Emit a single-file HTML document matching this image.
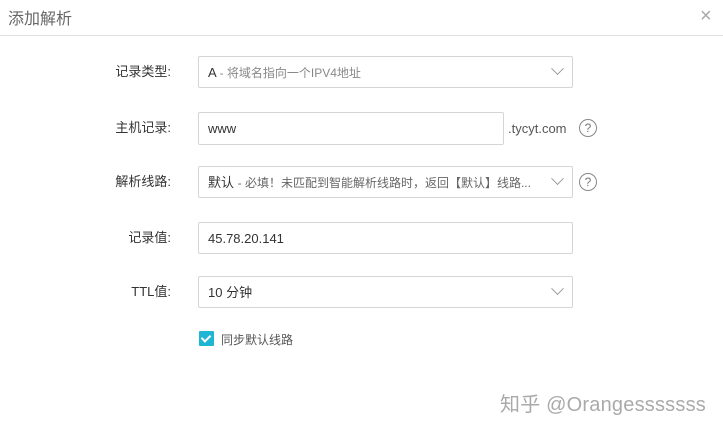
<!DOCTYPE html>
<html><head><meta charset="utf-8"><style>
body{margin:0;width:723px;height:433px;background:#fff;font-family:"Liberation Sans","Noto Sans CJK SC",sans-serif;position:relative;overflow:hidden;color:#333}
.t{position:absolute;left:8px;top:5px;font-size:16px;color:#666}
.hr{position:absolute;left:0;top:35px;width:723px;height:1px;background:#e2e2e2}
.x{position:absolute;left:700px;top:5px;font-size:20px;color:#aaa;font-weight:300}
.lab{position:absolute;right:552px;font-size:13px;color:#333;text-align:right;white-space:nowrap}
.box{position:absolute;left:198px;border:1px solid #d5d5d5;border-radius:2px;box-sizing:border-box;height:32px;font-size:13px;line-height:31px;padding-left:9px;color:#333;white-space:nowrap}
.arr{position:absolute;right:10px;top:10px;width:8px;height:8px;border-right:1px solid #999;border-bottom:1px solid #999;transform:rotate(45deg) translate(-2px,-2px)}
.q{position:absolute;width:16px;height:16px;border:1px solid #888;border-radius:50%;font-size:12px;line-height:16px;text-align:center;color:#777}
</style></head><body>
<div class="t">添加解析</div><div class="x">×</div><div class="hr"></div>
<div class="lab" style="top:61px">记录类型:</div>
<div class="box" style="top:56px;width:375px">A <span style="color:#888;font-size:12px">- 将域名指向一个IPV4地址</span><div class="arr"></div></div>
<div class="lab" style="top:117px">主机记录:</div>
<div class="box" style="top:112px;width:306px;height:33px">www</div>
<div style="position:absolute;left:508px;top:121px;font-size:13px;color:#555">.tycyt.com</div>
<div class="q" style="left:579px;top:119px">?</div>
<div class="lab" style="top:171px">解析线路:</div>
<div class="box" style="top:166px;width:375px">默认 <span style="color:#666;font-size:12px">- 必填！未匹配到智能解析线路时，返回【默认】线路...</span><div class="arr"></div></div>
<div class="q" style="left:579px;top:173px">?</div>
<div class="lab" style="top:227px">记录值:</div>
<div class="box" style="top:222px;width:375px">45.78.20.141</div>
<div class="lab" style="top:281px">TTL值:</div>
<div class="box" style="top:276px;width:375px">10 分钟<div class="arr"></div></div>
<div style="position:absolute;left:199px;top:331px;width:15px;height:15px;background:#1fb6d4;border-radius:1px"><div style="position:absolute;left:4px;top:2px;width:4px;height:7px;border-right:2px solid #fff;border-bottom:2px solid #fff;transform:rotate(45deg)"></div></div>
<div style="position:absolute;left:221px;top:331px;font-size:12px;color:#555">同步默认线路</div>
<div style="position:absolute;left:500px;top:388px;font-size:20px;color:#aaa;letter-spacing:0.2px">知乎 @Orangesssssss</div>
</body></html>
